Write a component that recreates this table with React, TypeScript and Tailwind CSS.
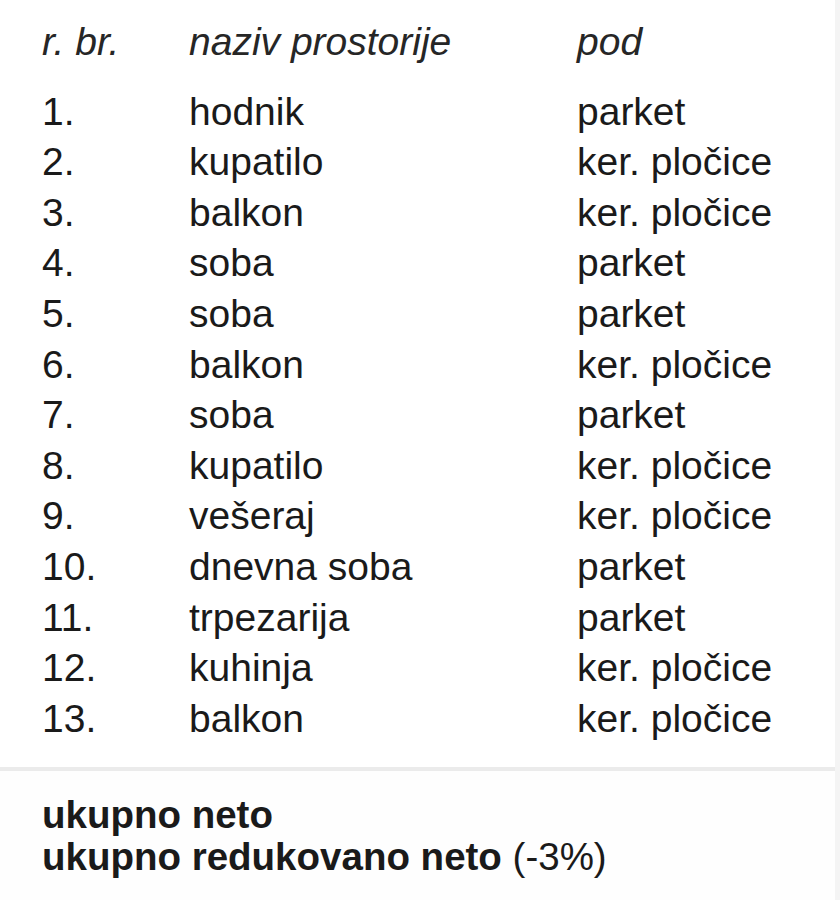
const rows: [string, string, string][] = [
  ['1.', 'hodnik', 'parket'],
  ['2.', 'kupatilo', 'ker. pločice'],
  ['3.', 'balkon', 'ker. pločice'],
  ['4.', 'soba', 'parket'],
  ['5.', 'soba', 'parket'],
  ['6.', 'balkon', 'ker. pločice'],
  ['7.', 'soba', 'parket'],
  ['8.', 'kupatilo', 'ker. pločice'],
  ['9.', 'vešeraj', 'ker. pločice'],
  ['10.', 'dnevna soba', 'parket'],
  ['11.', 'trpezarija', 'parket'],
  ['12.', 'kuhinja', 'ker. pločice'],
  ['13.', 'balkon', 'ker. pločice'],
];

export default function App() {
  return (
    <div
      className="flex w-[840px] h-[900px] bg-white text-[#1a1a1a]"
      style={{ fontFamily: '"Liberation Sans", Arial, sans-serif' }}
    >
      <div className="flex flex-col w-[835px]">
        <div className="pt-[17px] pb-[23px] pl-[42px] text-[39px]">
          <div className="grid grid-cols-[147px_388px_1fr] leading-[50.6px] italic text-[#262626] mb-[19px]">
            <span>r. br.</span>
            <span>naziv prostorije</span>
            <span>pod</span>
          </div>
          {rows.map(([n, name, floor]) => (
            <div key={n} className="grid grid-cols-[147px_388px_1fr] leading-[50.6px]">
              <span>{n}</span>
              <span>{name}</span>
              <span>{floor}</span>
            </div>
          ))}
        </div>
        <div className="h-[4px] bg-[#ebebeb]" />
        <div className="pt-[23px] pl-[42px] text-[38.5px] leading-[42px] bg-[#fefefe] flex-1">
          <div className="font-bold">ukupno neto</div>
          <div>
            <span className="font-bold">ukupno redukovano neto</span> (-3%)
          </div>
        </div>
      </div>
      <div className="flex-1 bg-[#f4f4f4]" />
    </div>
  );
}
